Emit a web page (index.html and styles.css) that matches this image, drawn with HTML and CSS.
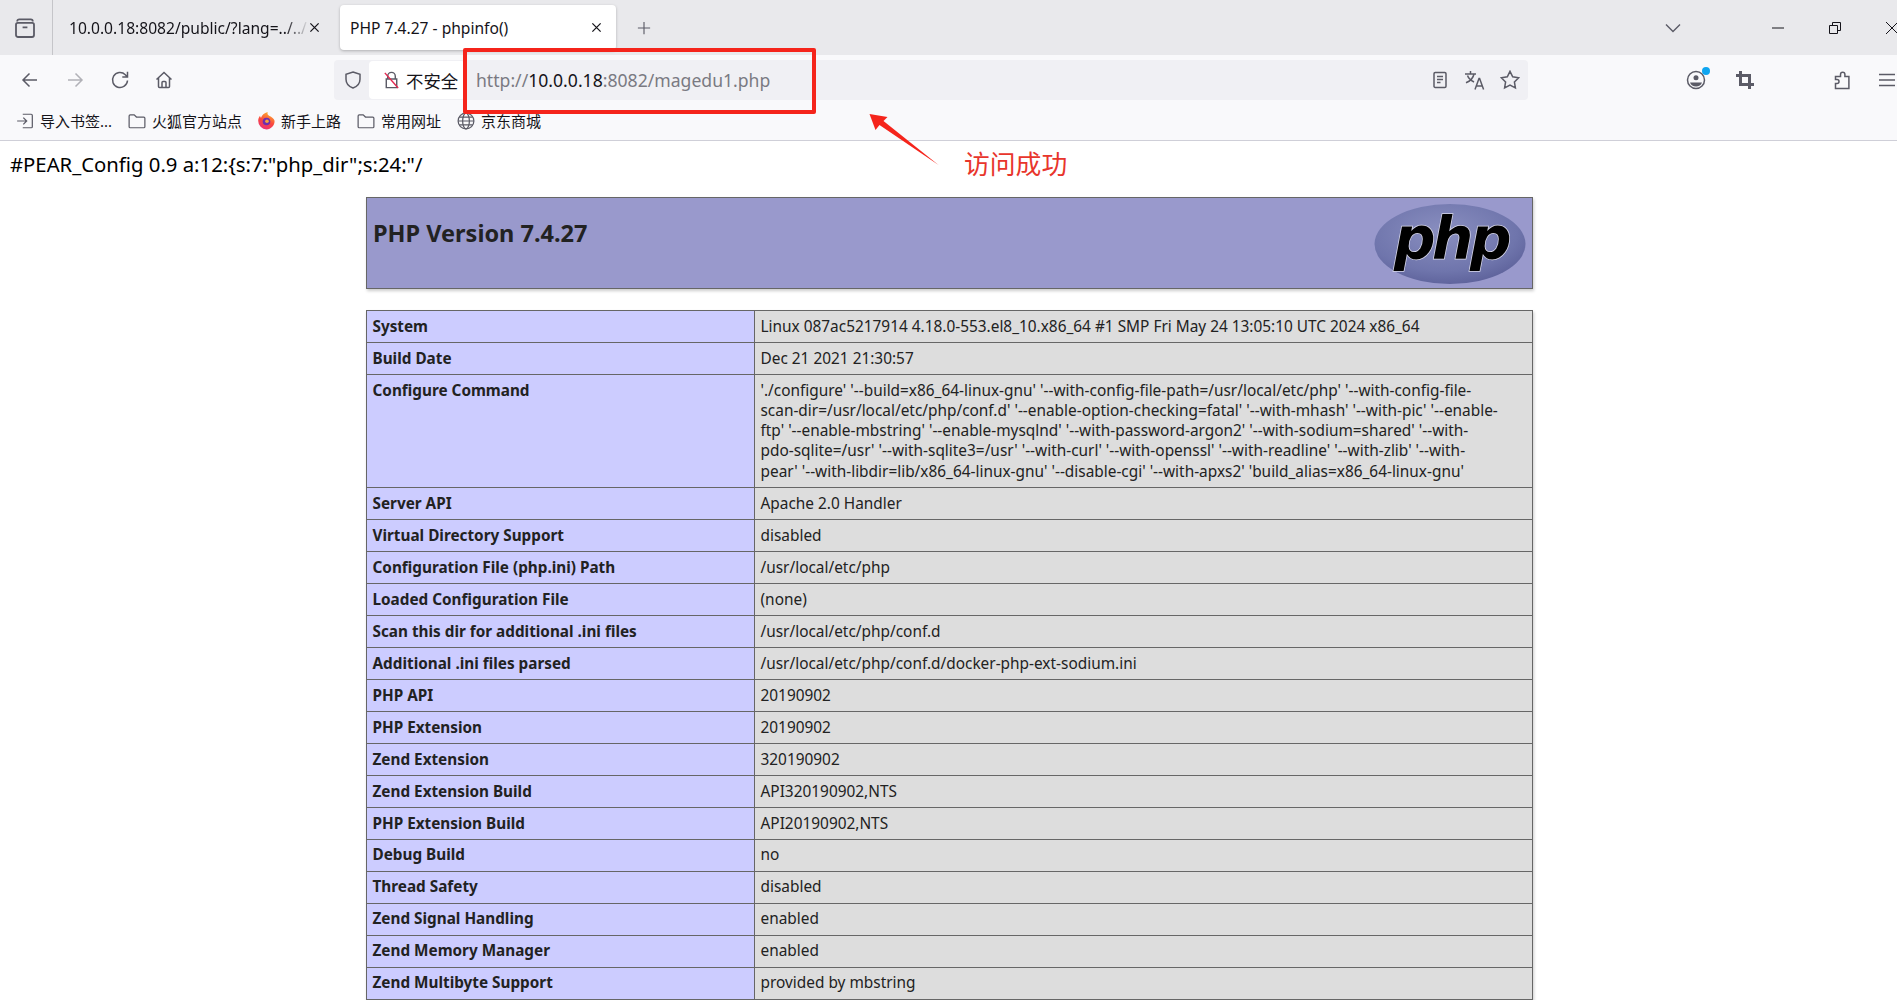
FILE: index.html
```html
<!DOCTYPE html>
<html lang="zh-CN">

<head>
    <meta charset="UTF-8" />
    <title>PHP 7.4.27 - phpinfo()</title>
    <link rel="stylesheet" href="styles.css">
</head>

<body>
    <div class="window">
        <div class="tabbar">
            <div class="tab-side">
                <svg class="icon" viewBox="0 0 20 20"><path d="M3.500 4.500c0-1 .7-1.700 1.700-1.700h9.600c1 0 1.700.7 1.700 1.700M2.500 7.200c0-.9.700-1.400 1.500-1.400h12c.8 0 1.500.5 1.500 1.400v8.600c0 1-.7 1.700-1.700 1.700H4.200c-1 0-1.700-.7-1.700-1.700zM8 9.500h4"/></svg>
            </div>
            <div class="tab tab-first">
                <span class="tab-title tab-fade">10.0.0.18:8082/public/?lang=../../</span>
                <svg class="tab-close" viewBox="0 0 12 12"><path d="M1.500 1.500l9 9M10.500 1.500l-9 9"/></svg>
            </div>
            <div class="tab tab-active">
                <span class="tab-title">PHP 7.4.27 - phpinfo()</span>
                <svg class="tab-close" viewBox="0 0 12 12"><path d="M1.500 1.500l9 9M10.500 1.500l-9 9"/></svg>
            </div>
            <svg class="new-tab" viewBox="0 0 16 16"><path d="M8 1v14M1 8h14"/></svg>
            <div class="tab-spacer"></div>
            <svg class="tab-list" viewBox="0 0 16 10"><path d="M1 1.500l7 7 7-7"/></svg>
            <div class="win-controls">
                <svg class="win-btn" viewBox="0 0 12 12"><path d="M0 6h12"/></svg>
                <svg class="win-btn" viewBox="0 0 12 12"><path d="M.5 3.500h8v8h-8zM3.500 3.500V.5h8v8h-3"/></svg>
                <svg class="win-btn" viewBox="0 0 12 12"><path d="M0 0l12 12M12 0L0 12"/></svg>
            </div>
        </div>

        <div class="navbar">
            <svg class="icon nav-back" viewBox="0 0 20 20"><path d="M17 10H3.500M9.500 3.500L3 10l6.500 6.500"/></svg>
            <svg class="icon nav-forward" viewBox="0 0 20 20"><path d="M3 10h13.500M10.500 3.500L17 10l-6.500 6.500"/></svg>
            <svg class="icon nav-reload" viewBox="0 0 20 20"><path d="M17.500 10.500a7.500 7.500 0 1 1-2.200-5.800L17.500 7M17.500 1.800V7h-5.200"/></svg>
            <svg class="icon nav-home" viewBox="0 0 20 20"><path d="M2.500 9.500L10 2.500l7.500 7M4.500 8v8.500c0 .6.400 1 1 1h9c.6 0 1-.4 1-1V8M8 17.500v-5c0-.6.400-1 1-1h2c.6 0 1 .4 1 1v5"/></svg>
            <div class="urlbar">
                <svg class="icon shield" viewBox="0 0 20 20"><path d="M10 2l7 2.200v5c0 4.300-3 7.300-7 8.800-4-1.500-7-4.500-7-8.800v-5z"/></svg>
                <div class="site-info">
                    <svg class="icon lock" viewBox="0 0 20 20"><path d="M6 9V6a4 4 0 0 1 8 0v3M4.500 9h11v9h-11z"/><path class="lock-slash" d="M3 2.500l14 16"/></svg>
                    <span>不安全</span>
                </div>
                <div class="url-text">http://<b>10.0.0.18</b>:8082/magedu1.php</div>
                <svg class="icon" viewBox="0 0 20 20"><path d="M4 3.800c0-.7.500-1.200 1.200-1.200h9.600c.7 0 1.200.5 1.200 1.200v12.400c0 .7-.5 1.200-1.200 1.200H5.200c-.7 0-1.200-.5-1.200-1.200zM7 6.500h6M7 9.500h6M7 12.500h3.500"/></svg>
                <svg class="icon" viewBox="0 0 20 20"><path d="M0 4h11M5.500 1v3M9 4c-.8 4-3.500 7-8 8.800M2.500 5.500c1 3 3.500 5 6.500 6.500M10 19.500l4-11h.6l4 11M11.500 16h5.500"/></svg>
                <svg class="icon" viewBox="0 0 20 20"><path d="M10 1.300l2.700 5.500 6 .9-4.300 4.200 1 6-5.400-2.800-5.400 2.800 1-6-4.300-4.200 6-.9z"/></svg>
            </div>
            <div class="account">
                <svg class="icon" viewBox="0 0 20 20"><circle cx="10" cy="10" r="8.500"/><circle class="fill" cx="10" cy="7.800" r="2.500"/><path class="fill" d="M4 12.500h12c-.8 2.700-3.200 4-6 4s-5.200-1.300-6-4z"/></svg>
                <span class="badge"></span>
            </div>
            <svg class="icon crop" viewBox="0 0 20 20"><path d="M5.500 1v13.500H19M1 5.500h13.500V19"/></svg>
            <svg class="icon ext" viewBox="0 0 20 20"><path d="M3.500 18.500v-5h1.500a2 2 0 0 0 0-4H3.500V6.500h5V4.500a2.200 2.200 0 0 1 4.400 0v2h4v12z"/></svg>
            <svg class="icon menu" viewBox="0 0 20 20"><path d="M2 4.500h16M2 10h16M2 15.500h16"/></svg>
        </div>

        <div class="bookmarks">
            <div class="bookmark">
                <svg class="icon-sm" viewBox="0 0 16 16"><path d="M6 2h7.500c.6 0 1 .4 1 1v10c0 .6-.4 1-1 1H6M1 8h8.500M6.500 5l3 3-3 3"/></svg>
                <span>导入书签...</span>
            </div>
            <div class="bookmark">
                <svg class="icon-sm" viewBox="0 0 16 16"><path d="M1 3.500c0-.6.400-1 1-1h3.500L7.500 4.500H14c.6 0 1 .4 1 1v7.500c0 .6-.4 1-1 1H2c-.6 0-1-.4-1-1z"/></svg>
                <span>火狐官方站点</span>
            </div>
            <div class="bookmark">
                <svg class="icon-ff" viewBox="0 0 16 16">
                    <defs>
                        <linearGradient id="ffGrad" x1="0.7" y1="0" x2="0.3" y2="1">
                            <stop offset="0" stop-color="#ffb52e" />
                            <stop offset="0.55" stop-color="#f9473e" />
                            <stop offset="1" stop-color="#e9307c" />
                        </linearGradient>
                    </defs>
                    <path fill="url(#ffGrad)" d="M8 15.500A7.200 7.200 0 0 1 1 8.300C1 6.500 1.700 5 2.600 4c0 .7.300 1.300.8 1.600C4 3.500 6 1.700 9 .8c-.5 1.500 0 2.500 1.200 3.200 2.300 1.200 4.100 2.300 4.600 4.300.2 4-3 7.200-6.800 7.200z"/>
                    <circle cx="8" cy="8.800" r="3.200" fill="#6d2fb0"/>
                    <circle cx="8.400" cy="8.600" r="1.500" fill="#f7a33a"/>
                </svg>
                <span>新手上路</span>
            </div>
            <div class="bookmark">
                <svg class="icon-sm" viewBox="0 0 16 16"><path d="M1 3.500c0-.6.400-1 1-1h3.500L7.500 4.500H14c.6 0 1 .4 1 1v7.500c0 .6-.4 1-1 1H2c-.6 0-1-.4-1-1z"/></svg>
                <span>常用网址</span>
            </div>
            <div class="bookmark">
                <svg class="icon-sm" viewBox="0 0 16 16"><circle cx="8" cy="8" r="7"/><ellipse cx="8" cy="8" rx="3" ry="7"/><path d="M1 8h14M2 4.500h12M2 11.500h12"/></svg>
                <span>京东商城</span>
            </div>
        </div>

        <div class="page">
            <p class="pear">#PEAR_Config 0.9 a:12:{s:7:"php_dir";s:24:"/</p>

            <div class="phpinfo">
                <div class="php-header">
                    <h1>PHP Version 7.4.27</h1>
                    <svg class="php-logo" viewBox="0 0 152 82">
                        <defs>
                            <radialGradient id="logoGrad" cx="0.45" cy="0.35" r="0.7">
                                <stop offset="0" stop-color="#8a8fc0" />
                                <stop offset="0.7" stop-color="#6f75ac" />
                                <stop offset="1" stop-color="#5b5f98" />
                            </radialGradient>
                        </defs>
                        <ellipse cx="76" cy="41" rx="75.500" ry="40" fill="url(#logoGrad)" />
                        <text class="php-logo-text" x="77" y="56">php</text>
                    </svg>
                </div>

                <table class="info">
                    <colgroup>
                        <col class="col-label">
                        <col>
                    </colgroup>
                    <tr><td class="label">System</td><td class="value">Linux 087ac5217914 4.18.0-553.el8_10.x86_64 #1 SMP Fri May 24 13:05:10 UTC 2024 x86_64</td></tr>
                    <tr><td class="label">Build Date</td><td class="value">Dec 21 2021 21:30:57</td></tr>
                    <tr><td class="label">Configure Command</td><td class="value cmd">'./configure' '--build=x86_64-linux-gnu' '--with-config-file-path=/usr/local/etc/php' '--with-config-file-<br>scan-dir=/usr/local/etc/php/conf.d' '--enable-option-checking=fatal' '--with-mhash' '--with-pic' '--enable-<br>ftp' '--enable-mbstring' '--enable-mysqlnd' '--with-password-argon2' '--with-sodium=shared' '--with-<br>pdo-sqlite=/usr' '--with-sqlite3=/usr' '--with-curl' '--with-openssl' '--with-readline' '--with-zlib' '--with-<br>pear' '--with-libdir=lib/x86_64-linux-gnu' '--disable-cgi' '--with-apxs2' 'build_alias=x86_64-linux-gnu'</td></tr>
                    <tr><td class="label">Server API</td><td class="value">Apache 2.0 Handler</td></tr>
                    <tr><td class="label">Virtual Directory Support</td><td class="value">disabled</td></tr>
                    <tr><td class="label">Configuration File (php.ini) Path</td><td class="value">/usr/local/etc/php</td></tr>
                    <tr><td class="label">Loaded Configuration File</td><td class="value">(none)</td></tr>
                    <tr><td class="label">Scan this dir for additional .ini files</td><td class="value">/usr/local/etc/php/conf.d</td></tr>
                    <tr><td class="label">Additional .ini files parsed</td><td class="value">/usr/local/etc/php/conf.d/docker-php-ext-sodium.ini</td></tr>
                    <tr><td class="label">PHP API</td><td class="value">20190902</td></tr>
                    <tr><td class="label">PHP Extension</td><td class="value">20190902</td></tr>
                    <tr><td class="label">Zend Extension</td><td class="value">320190902</td></tr>
                    <tr><td class="label">Zend Extension Build</td><td class="value">API320190902,NTS</td></tr>
                    <tr><td class="label">PHP Extension Build</td><td class="value">API20190902,NTS</td></tr>
                    <tr><td class="label">Debug Build</td><td class="value">no</td></tr>
                    <tr><td class="label">Thread Safety</td><td class="value">disabled</td></tr>
                    <tr><td class="label">Zend Signal Handling</td><td class="value">enabled</td></tr>
                    <tr><td class="label">Zend Memory Manager</td><td class="value">enabled</td></tr>
                    <tr><td class="label">Zend Multibyte Support</td><td class="value">provided by mbstring</td></tr>
                    <tr><td class="label">IPv6 Support</td><td class="value">enabled</td></tr>
                </table>
            </div>
        </div>

        <!-- red marks drawn over the screenshot -->
        <div class="mark-box"></div>
        <svg class="mark-arrow" viewBox="0 0 70 52"><path d="M1 1l18 3-4 4 55 44-59-40-4 5z"/></svg>
        <div class="mark-text">访问成功</div>
    </div>
</body>

</html>
```

FILE: styles.css
```css
html,
body {
    margin: 0;
    padding: 0;
    height: 100%;
    overflow: hidden;
    background: #fff;
}

body {
    font-family: "Noto Sans", "Noto Sans CJK SC", sans-serif;
    color: #15141a;
}

.window {
    position: relative;
    height: 1000px;
    overflow: hidden;
}

svg {
    flex: none;
    display: block;
}

.icon {
    width: 20px;
    height: 20px;
    fill: none;
    stroke: #5b5b66;
    stroke-width: 1.500;
}

.icon .fill {
    fill: #5b5b66;
    stroke: none;
}

.icon-sm {
    width: 18px;
    height: 18px;
    fill: none;
    stroke: #5b5b66;
    stroke-width: 1.100;
}

.icon-ff {
    width: 19px;
    height: 19px;
    margin: 0 -1px;
}

/* tab strip */
.tabbar {
    height: 55px;
    background: #e9e9ec;
    display: flex;
    align-items: center;
}

.tab-side {
    width: 53px;
    height: 55px;
    border-right: 1px solid #c5c5c9;
    box-sizing: border-box;
    display: flex;
    align-items: center;
    justify-content: center;
    margin-right: 1px;
}

.tab-side .icon {
    width: 24px;
    height: 24px;
    margin-left: -3px;
}

.tab {
    width: 276px;
    height: 45px;
    padding: 0 14px 0 15px;
    box-sizing: border-box;
    display: flex;
    align-items: center;
    font-size: 15.600px;
    color: #15141a;
}

.tab-first {
    width: 280px;
    margin-right: 6px;
}

.tab-active {
    padding-left: 10px;
    background: #fff;
    border-radius: 4px;
    box-shadow: 0 1px 3px rgba(0, 0, 0, 0.25);
}

.tab-title {
    flex: 1;
    overflow: hidden;
    white-space: nowrap;
}

.tab-fade {
    -webkit-mask-image: linear-gradient(90deg, #000 90%, transparent);
    mask-image: linear-gradient(90deg, #000 90%, transparent);
}

.tab-close {
    width: 11px;
    height: 11px;
    fill: none;
    stroke: #15141a;
    stroke-width: 1.400;
}

.new-tab {
    width: 14px;
    height: 14px;
    margin-left: 21px;
    fill: none;
    stroke: #5b5b66;
    stroke-width: 1.300;
}

.tab-spacer {
    flex: 1;
}

.tab-list {
    width: 16px;
    height: 10px;
    fill: none;
    stroke: #5b5b66;
    stroke-width: 1.400;
    margin-right: 91px;
}

.win-controls {
    display: flex;
    gap: 45px;
    margin-right: -1px;
}

.win-btn {
    width: 12px;
    height: 12px;
    fill: none;
    stroke: #15141a;
    stroke-width: 1;
}

/* navigation toolbar */
.navbar {
    height: 40px;
    background: #f9f9fb;
    display: flex;
    align-items: center;
    padding-left: 20px;
    padding-top: 5px;
}

.nav-back {
    margin-right: 25px;
}

.nav-forward {
    margin-right: 25px;
    opacity: 0.45;
}

.nav-reload {
    margin-right: 24px;
}

.nav-home {
    margin-right: 160px;
}

.urlbar {
    width: 1199px;
    height: 40px;
    box-sizing: border-box;
    background: #f0f0f4;
    border-radius: 4px;
    display: flex;
    align-items: center;
    gap: 15px;
    padding-right: 8px;
}

.urlbar .shield {
    margin-left: 9px;
    margin-right: -9px;
}

.site-info {
    width: 96px;
    height: 38px;
    flex: none;
    background: #fff;
    border-radius: 4px;
    display: flex;
    align-items: center;
    gap: 5px;
    padding-left: 13px;
    box-sizing: border-box;
    font-size: 17.400px;
    white-space: nowrap;
}

.lock {
    width: 19px;
    height: 20px;
}

.lock .lock-slash {
    stroke: #e22850;
}

.url-text {
    flex: 1;
    font-size: 17.600px;
    color: #7a7a82;
    margin-left: -4px;
    white-space: nowrap;
}

.url-text b {
    font-weight: 400;
    color: #15141a;
}

.account {
    position: relative;
    margin-left: 158px;
    margin-right: 29px;
}

.badge {
    position: absolute;
    top: -3px;
    right: -4px;
    width: 8px;
    height: 8px;
    border-radius: 50%;
    background: #0ea5f0;
}

.crop {
    stroke-width: 3;
    margin-right: 77px;
}

.ext {
    margin-right: 25px;
}

/* bookmarks toolbar */
.bookmarks {
    height: 40px;
    background: #f9f9fb;
    border-bottom: 1px solid #cfcfd8;
    display: flex;
    align-items: center;
    padding-left: 16px;
    padding-top: 1px;
    box-sizing: border-box;
    height: 41px;
    gap: 16px;
    font-size: 15px;
}

.bookmark {
    display: flex;
    align-items: center;
    gap: 6px;
    white-space: nowrap;
}

/* page content */
.pear {
    margin: 0 0 0 10px;
    height: 56px;
    font-size: 20.300px;
    line-height: 46px;
    color: #000;
}

.phpinfo {
    width: 1167px;
    margin-left: 366px;
    color: #222;
}

.php-header {
    height: 92px;
    box-sizing: border-box;
    background: #99c;
    border: 1px solid #666;
    box-shadow: 1px 2px 3px #ccc;
    display: flex;
    justify-content: space-between;
    padding: 5px 6px 0 6px;
    margin-bottom: 21px;
}

h1 {
    margin: 14px 0 0;
    font-size: 23.500px;
    line-height: 32px;
    font-weight: 700;
}

.php-logo {
    width: 152px;
    height: 82px;
}

.php-logo-text {
    font-family: "DejaVu Sans", sans-serif;
    font-weight: 700;
    font-style: italic;
    font-size: 58px;
    text-anchor: middle;
    letter-spacing: -3.500px;
    fill: #000;
    stroke: #d8d8ea;
    stroke-width: 1.500;
    paint-order: stroke;
}

.info {
    width: 100%;
    table-layout: fixed;
    border-collapse: collapse;
    box-shadow: 1px 2px 3px #ccc;
}

.col-label {
    width: 388px;
}

.info td {
    border: 1px solid #666;
    padding: 4.900px 5.500px;
    font-size: 15.400px;
    line-height: 20.200px;
    vertical-align: baseline;
}

.info .cmd {
    white-space: nowrap;
}

.label {
    background: #ccf;
    font-weight: 700;
}

.info .label {
    font-size: 15.300px;
}

.value {
    background: #ddd;
}

/* annotation marks */
.mark-box {
    position: absolute;
    left: 463px;
    top: 48px;
    width: 353px;
    height: 66px;
    box-sizing: border-box;
    border: 4px solid #f5241b;
    border-radius: 2px;
}

.mark-arrow {
    position: absolute;
    left: 868px;
    top: 113px;
    width: 71px;
    height: 52px;
    fill: #f5241b;
}

.mark-text {
    position: absolute;
    left: 964px;
    top: 147px;
    font-size: 25.800px;
    line-height: 34px;
    color: #e8352c;
}
```
